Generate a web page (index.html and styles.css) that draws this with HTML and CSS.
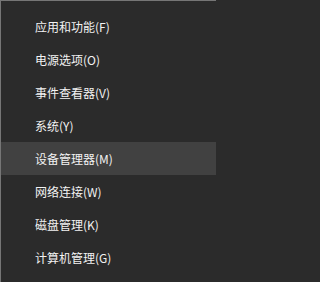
FILE: index.html
```html
<!DOCTYPE html>
<html lang="zh-CN">
<head>
<meta charset="utf-8">
<link rel="stylesheet" href="styles.css">
</head>
<body>
<div class="menu">
  <ul class="list">
    <li class="item">应用和功能(F)</li>
    <li class="item">电源选项(O)</li>
    <li class="item">事件查看器(V)</li>
    <li class="item">系统(Y)</li>
    <li class="item active">设备管理器(M)</li>
    <li class="item">网络连接(W)</li>
    <li class="item">磁盘管理(K)</li>
    <li class="item">计算机管理(G)</li>
  </ul>
</div>
</body>
</html>
```
FILE: styles.css
```css
html, body {
  margin: 0;
  padding: 0;
  background: #2b2b2b;
}
.menu {
  width: 216px;
  height: 282px;
  box-sizing: border-box;
  background: #2b2b2b;
  border-top: 1px solid #767676;
  border-left: 1px solid #767676;
  padding-top: 9px;
  font-family: "Noto Sans CJK SC", "Noto Sans", sans-serif;
  font-size: 12px;
  color: #f2f2f2;
}
.list {
  list-style: none;
  margin: 0;
  padding: 0;
  display: flex;
  flex-direction: column;
}
.item {
  height: 33px;
  line-height: 33px;
  padding-left: 34px;
  white-space: nowrap;
}
.item.active {
  background: #414141;
}
```
